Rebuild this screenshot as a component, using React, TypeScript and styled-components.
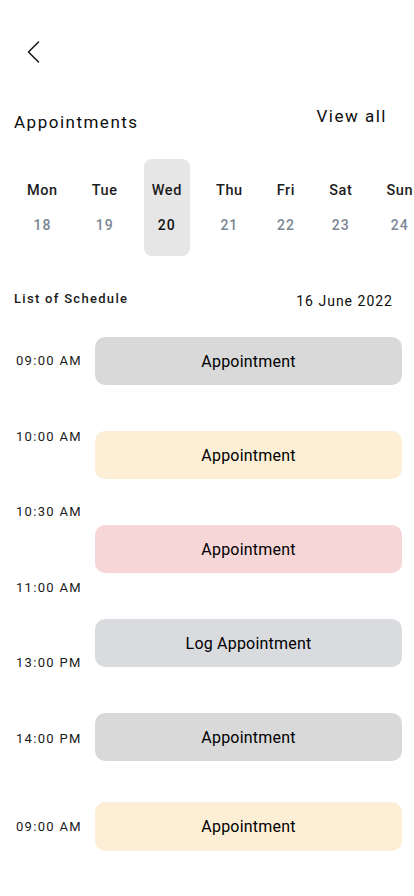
import React from 'react';
import styled, { createGlobalStyle } from 'styled-components';

const GlobalStyle = createGlobalStyle`
  html, body {
    margin: 0;
    padding: 0;
    background: #ffffff;
    overflow-x: hidden;
  }
  body {
    font-family: Roboto, "Noto Sans", "Liberation Sans", sans-serif;
    color: #1c1c1c;
  }
`;

const Page = styled.div`
  width: 414px;
  min-height: 896px;
  box-sizing: border-box;
  padding: 0 12px 40px 14px;
  display: flex;
  flex-direction: column;
`;

const BackButton = styled.button`
  display: block;
  align-self: flex-start;
  margin: 41px 0 0 13px;
  padding: 0;
  border: 0;
  background: none;
  cursor: pointer;
  line-height: 0;
`;

const HeaderRow = styled.div`
  display: flex;
  justify-content: space-between;
  align-items: flex-start;
  margin-top: 43px;
`;

const Title = styled.h1`
  margin: 6px 0 0;
  font-size: 17px;
  line-height: 20px;
  font-weight: 400;
  letter-spacing: 1.5px;
  color: #0d0d0d;
`;

const ViewAll = styled.a`
  margin-right: 15px;
  font-size: 17px;
  line-height: 20px;
  font-weight: 400;
  letter-spacing: 1.5px;
  color: #0d0d0d;
  text-decoration: none;
  cursor: pointer;
`;

const DayRow = styled.div`
  display: flex;
  gap: 18px;
  margin: 27px -12px 0 0;
  padding-left: 5px;
  overflow: hidden;
`;

const Day = styled.div<{ $active?: boolean }>`
  flex: none;
  display: flex;
  flex-direction: column;
  align-items: center;
  gap: 16px;
  padding: 23px 8px 22px;
  border-radius: 8px;
  background: ${p => (p.$active ? '#e6e6e6' : 'transparent')};
`;

const DayName = styled.span`
  font-size: 14.5px;
  line-height: 18px;
  font-weight: 500;
  letter-spacing: 0.6px;
  color: #1c1c1c;
`;

const DayNum = styled.span<{ $active?: boolean }>`
  font-size: 14px;
  line-height: 18px;
  font-weight: 500;
  letter-spacing: 1px;
  color: ${p => (p.$active ? '#111111' : '#7b8794')};
`;

const ScheduleHeader = styled.div`
  display: flex;
  justify-content: space-between;
  align-items: flex-start;
  margin-top: 35px;
`;

const ScheduleTitle = styled.h2`
  margin: 0;
  font-size: 13px;
  line-height: 16px;
  font-weight: 500;
  letter-spacing: 1.3px;
  color: #1a1a1a;
`;

const ScheduleDate = styled.span`
  margin: 2px 9px 0 0;
  font-size: 14px;
  line-height: 17px;
  letter-spacing: 1px;
  color: #0d0d0d;
`;

const Timeline = styled.div`
  display: flex;
  margin-top: 27px;
`;

const TimeColumn = styled.div`
  width: 81px;
  flex: none;
  display: flex;
  flex-direction: column;
  gap: 59.6px;
  padding: 16px 0 0 2px;
  box-sizing: border-box;
`;

const Time = styled.span`
  font-size: 13px;
  line-height: 16px;
  letter-spacing: 1.3px;
  color: #1a1a1a;
  white-space: nowrap;
`;

const CardColumn = styled.div`
  flex: 1;
  display: flex;
  flex-direction: column;
  gap: 46px;
`;

const Card = styled.div<{ $tone: string }>`
  height: 48px;
  display: flex;
  align-items: center;
  justify-content: center;
  border-radius: 10px;
  background: ${p => p.$tone};
  font-size: 16px;
  font-weight: 400;
  letter-spacing: 0.2px;
  color: #000000;
`;

const LastRow = styled.div`
  display: flex;
  align-items: center;
  margin-top: 41px;
`;

const LastTime = styled(Time)`
  width: 81px;
  flex: none;
  padding-left: 2px;
  box-sizing: border-box;
`;

const LastCard = styled(Card)`
  flex: 1;
  height: 49px;
`;

const tones = {
  grey: '#d9d9d9',
  cream: '#fcefd6',
  pink: '#f7d6d8',
  slate: '#dadbdf',
};

const days = [
  { name: 'Mon', num: 18 },
  { name: 'Tue', num: 19 },
  { name: 'Wed', num: 20, active: true },
  { name: 'Thu', num: 21 },
  { name: 'Fri', num: 22 },
  { name: 'Sat', num: 23 },
  { name: 'Sun', num: 24 },
];

const times = ['09:00 AM', '10:00 AM', '10:30 AM', '11:00 AM', '13:00 PM', '14:00 PM'];

const cards = [
  { label: 'Appointment', tone: tones.grey },
  { label: 'Appointment', tone: tones.cream },
  { label: 'Appointment', tone: tones.pink },
  { label: 'Log Appointment', tone: tones.slate },
  { label: 'Appointment', tone: tones.grey },
];

export default function App() {
  return (
    <>
      <GlobalStyle />
      <Page>
        <BackButton aria-label="Back">
          <svg width="13" height="22" viewBox="0 0 13 22" fill="none">
            <polyline
              points="11.5,1 1.5,11 11.5,21"
              stroke="#1a1a1a"
              strokeWidth="1.6"
              strokeLinecap="round"
              strokeLinejoin="round"
            />
          </svg>
        </BackButton>

        <HeaderRow>
          <Title>Appointments</Title>
          <ViewAll>View all</ViewAll>
        </HeaderRow>

        <DayRow>
          {days.map(d => (
            <Day key={d.name} $active={d.active}>
              <DayName>{d.name}</DayName>
              <DayNum $active={d.active}>{d.num}</DayNum>
            </Day>
          ))}
        </DayRow>

        <ScheduleHeader>
          <ScheduleTitle>List of Schedule</ScheduleTitle>
          <ScheduleDate>16 June 2022</ScheduleDate>
        </ScheduleHeader>

        <Timeline>
          <TimeColumn>
            {times.map(t => (
              <Time key={t}>{t}</Time>
            ))}
          </TimeColumn>
          <CardColumn>
            {cards.map((c, i) => (
              <Card key={i} $tone={c.tone}>
                {c.label}
              </Card>
            ))}
          </CardColumn>
        </Timeline>

        <LastRow>
          <LastTime>09:00 AM</LastTime>
          <LastCard $tone={tones.cream}>Appointment</LastCard>
        </LastRow>
      </Page>
    </>
  );
}
